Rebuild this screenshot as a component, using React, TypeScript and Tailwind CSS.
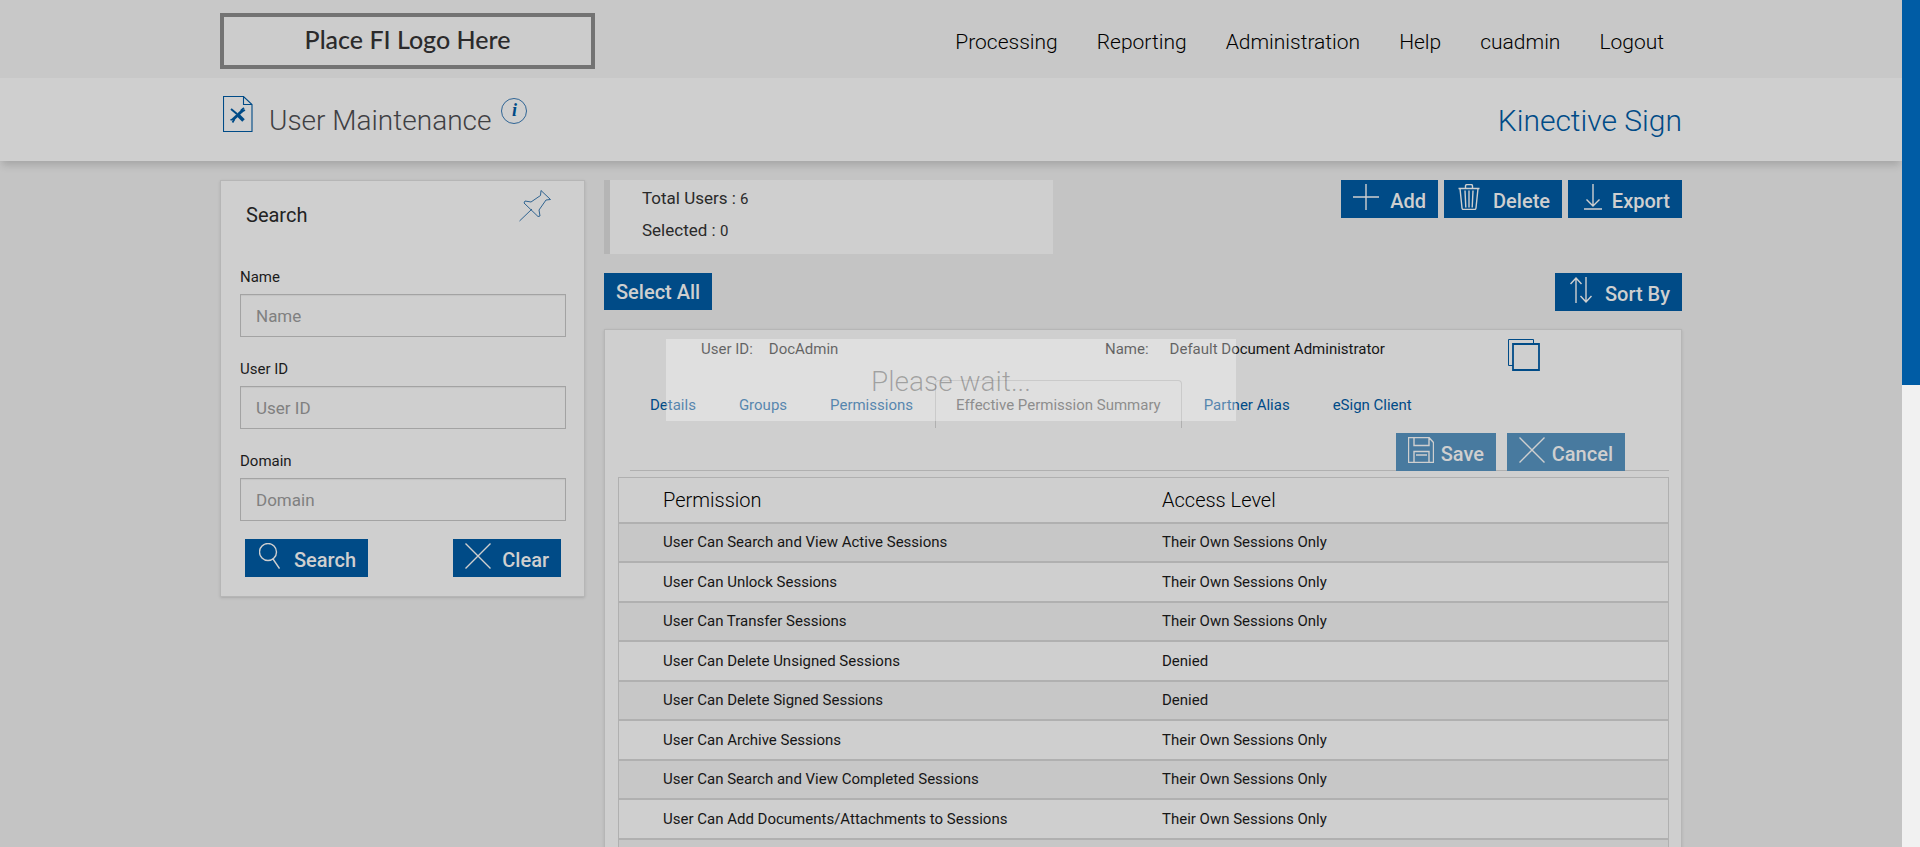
import type { ReactNode } from 'react';

type Permission = {
  name: string;
  access: string;
};

const navItems = ['Processing', 'Reporting', 'Administration', 'Help', 'cuadmin', 'Logout'];

const tabs = [
  'Details',
  'Groups',
  'Permissions',
  'Effective Permission Summary',
  'Partner Alias',
  'eSign Client',
];
const activeTab = 'Effective Permission Summary';

const permissions: Permission[] = [
  { name: 'User Can Search and View Active Sessions', access: 'Their Own Sessions Only' },
  { name: 'User Can Unlock Sessions', access: 'Their Own Sessions Only' },
  { name: 'User Can Transfer Sessions', access: 'Their Own Sessions Only' },
  { name: 'User Can Delete Unsigned Sessions', access: 'Denied' },
  { name: 'User Can Delete Signed Sessions', access: 'Denied' },
  { name: 'User Can Archive Sessions', access: 'Their Own Sessions Only' },
  { name: 'User Can Search and View Completed Sessions', access: 'Their Own Sessions Only' },
  { name: 'User Can Add Documents/Attachments to Sessions', access: 'Their Own Sessions Only' },
];

const iconPaths = {
  plus: 'M13 0v26M0 13h26',
  close: 'M0.500 0.500L25.500 25.500M25.500 0.500L0.500 25.500',
  search: 'M17.500 9a8.500 8.500 0 1 1-17 0a8.500 8.500 0 0 1 17 0zM14 16l6.500 9.500',
  trash:
    'M0.500 4.500h21M2 4.500l2 19.500q.2 1.500 1.500 1.500h11q1.300 0 1.500-1.500l2-19.500M7.500 4V2q0-1.500 1.500-1.500h4q1.500 0 1.500 1.500v2M7 6.500l.8 17M11 6.500v17M15 6.500l-.8 17',
  download: 'M9 0v21.500M2.500 15.500L9 22l6.500-6.500M0 25h18',
  sort: 'M6 26V1M0.500 7L6 1l5.500 6M16 0v25M10.500 19l5.500 6l5.500-6',
  save: 'M0.500 0.500h20.500l4.500 5v20h-25zM6 0.500v8h15v-8M6 25.500v-11h15v11M8 18h11',
};

function Icon({ name, width }: { name: keyof typeof iconPaths; width: number }) {
  return (
    <svg width={width} height={26} viewBox={`0 0 ${width} 26`} fill="none" stroke="currentColor" strokeWidth={1.4} aria-hidden="true">
      <path d={iconPaths[name]} />
    </svg>
  );
}

function ActionButton({
  children,
  icon,
  className = '',
}: {
  children: ReactNode;
  icon: ReactNode;
  className?: string;
}) {
  return (
    <button
      type="button"
      className={`flex h-[38px] items-start justify-between pt-1 pr-3 text-xl leading-[34px] font-medium text-[#cfcfcf] ${className}`}
    >
      {icon}
      {children}
    </button>
  );
}

function Field({ id, label }: { id: string; label: string }) {
  return (
    <div className="mb-[22px]">
      <label htmlFor={id} className="mb-[7px] block text-[15px] leading-5 text-[#1b1b1b]">
        {label}
      </label>
      <input
        id={id}
        type="text"
        placeholder={label}
        className="block h-[43px] w-full border border-[#a3a3a3] px-[15px] text-[17px] shadow-[inset_0_1px_1px_rgba(0,0,0,0.06)] placeholder:text-[#808080]"
      />
    </div>
  );
}

function Header() {
  return (
    <header>
      <div className="bg-[#c8c8c8]">
        <div className="mx-auto flex h-[78px] max-w-[1462px] items-center justify-between">
          <div className="mt-1 flex h-14 w-[375px] items-center justify-center border-4 border-[#737373] bg-[#cccccc] pb-0.5 font-['Lato'] text-[25px] font-medium text-[#2b2a2b]">
            Place FI Logo Here
          </div>
          <nav className="flex gap-[39px] pt-2 pr-[18px] text-[21px] font-light text-black">
            {navItems.map((item) => (
              <a key={item} href="#">
                {item}
              </a>
            ))}
          </nav>
        </div>
      </div>
      <div className="bg-[#cfcfcf] shadow-[0_6px_8px_-2px_rgba(0,0,0,0.16)]">
        <div className="mx-auto flex h-[83px] max-w-[1462px] items-center justify-between">
          <div className="flex items-center">
            <svg className="mb-3 ml-[3px]" width="30" height="36" viewBox="0 0 30 36" fill="none" stroke="#004b87" aria-hidden="true">
              <path d="M0.500 0.500h20l8.500 8v27h-28.500zM20.500 0.500v8h8.500" strokeWidth="1.100" />
              <path d="M10 23.500l9.500-9" strokeWidth="3" />
              <path d="M8 13l6 5" strokeWidth="2" />
              <path d="M15.500 19.500l5 5" strokeWidth="3.600" />
              <path d="M21 12l-2.500 2l.5 1.500l3-1.500M7.500 24l3-1l.5 1l-1.500 2.500" strokeWidth="1.800" />
            </svg>
            <h1 className="ml-4 pt-0.5 text-[28px] font-light text-[#3f4043]">User Maintenance</h1>
            <button
              type="button"
              aria-label="Page information"
              className="mb-[18px] ml-2.5 flex size-[26px] items-center justify-center rounded-full border border-[#2f6595] pb-px font-['Liberation_Serif'] text-lg font-bold text-[#004b87] italic"
            >
              i
            </button>
          </div>
          <div className="pt-0.5 text-[30px] font-light text-[#004b87]">Kinective Sign</div>
        </div>
      </div>
    </header>
  );
}

function SearchPanel() {
  return (
    <aside className="w-[365px] shrink-0 self-start border border-[#b6b6b6] bg-[#cfcfcf] pr-[18px] pb-[19px] pl-[19px] shadow-sm">
      <div className="flex h-[86px] items-start justify-between pt-[9px] pr-[15px] pl-1.5">
        <h2 className="pt-[11px] text-xl text-[#222]">Search</h2>
        <svg width="32" height="32" viewBox="0 0 32 32" fill="none" stroke="#2f6390" strokeWidth="1" aria-hidden="true">
          <path d="M22 0.500l9.500 9l-4.500.5l-7 10l1 6l-2 .5L5 13l1-2l6 1l9.500-6.500zM13 19L0.500 31" />
        </svg>
      </div>
      <form>
        <Field id="name" label="Name" />
        <Field id="user-id" label="User ID" />
        <Field id="domain" label="Domain" />
        <div className="-mt-1 flex justify-between px-[5px]">
          <ActionButton className="w-[123px] bg-[#004b87] pl-3.5" icon={<Icon name="search" width={21} />}>
            Search
          </ActionButton>
          <ActionButton className="w-[108px] bg-[#004b87] pl-3" icon={<Icon name="close" width={26} />}>
            Clear
          </ActionButton>
        </div>
      </form>
    </aside>
  );
}

function Toolbar() {
  return (
    <>
      <div className="flex items-start justify-between">
        <div className="h-[74px] w-[449px] border-l-6 border-[#b5b5b5] bg-[#cfcfcf] pt-[3px] pl-8 text-[17px] leading-[31px] text-[#2a2a2a]">
          <p>
            Total Users : <span className="text-[15px]">6</span>
          </p>
          <p>
            Selected : <span className="text-[15px]">0</span>
          </p>
        </div>
        <div className="flex gap-1.5">
          <ActionButton className="w-[97px] bg-[#004b87] pl-3" icon={<Icon name="plus" width={26} />}>
            Add
          </ActionButton>
          <ActionButton className="w-[118px] bg-[#004b87] pl-3.5" icon={<Icon name="trash" width={22} />}>
            Delete
          </ActionButton>
          <ActionButton className="w-[114px] bg-[#004b87] pl-4" icon={<Icon name="download" width={18} />}>
            Export
          </ActionButton>
        </div>
      </div>
      <div className="mt-[19px] mb-[18px] flex items-start justify-between">
        <button type="button" className="h-[37px] bg-[#004b87] px-3 text-xl font-medium text-[#cfcfcf]">
          Select All
        </button>
        <ActionButton className="w-[127px] bg-[#004b87] pl-[15px]" icon={<Icon name="sort" width={22} />}>
          Sort By
        </ActionButton>
      </div>
    </>
  );
}

function PermissionTable() {
  return (
    <table className="w-full table-fixed border-separate border-spacing-0 border-x border-[#b0b0b0] text-left text-[15px] text-[#161616]">
      <thead>
        <tr className="h-[46px] text-xl text-black">
          <th className="w-[543px] border-y border-[#b0b0b0] pl-11 font-light">Permission</th>
          <th className="border-y border-[#b0b0b0] font-light">Access Level</th>
        </tr>
      </thead>
      <tbody>
        {permissions.map((permission) => (
          <tr key={permission.name} className="odd:h-[39px] odd:bg-[#c7c7c7] even:h-10">
            <td className="border-y border-[#b0b0b0] pl-11">{permission.name}</td>
            <td className="border-y border-[#b0b0b0]">{permission.access}</td>
          </tr>
        ))}
        <tr className="h-10 bg-[#c7c7c7]">
          <td className="border-y border-[#b0b0b0]" />
          <td className="border-y border-[#b0b0b0]" />
        </tr>
      </tbody>
    </table>
  );
}

function UserCard() {
  return (
    <section className="border border-[#b6b6b6] bg-[#cfcfcf] pr-3 pl-[13px] shadow-sm">
      <div className="flex h-[50px] items-start pt-[9px] pl-[83px] text-[15px] leading-5 text-[#161616]">
        <div className="flex w-[404px] gap-4">
          <span>User ID:</span>
          <span>DocAdmin</span>
        </div>
        <div className="flex w-[403px] gap-[21px]">
          <span>Name:</span>
          <span>Default Document Administrator</span>
        </div>
        <button type="button" aria-label="Copy user" className="text-[#004b87]">
          <svg width="32" height="32" viewBox="0 0 32 32" fill="none" stroke="currentColor" aria-hidden="true">
            <path d="M5 26.500h-4.500v-26h25v4" strokeWidth="1" />
            <path d="M5 5h26v26h-26z" strokeWidth="1.800" />
          </svg>
        </button>
      </div>
      <div className="flex gap-px pl-[11px]">
        {tabs.map((tab) => (
          <button
            key={tab}
            type="button"
            className={`h-12 rounded-t border border-b-0 px-5 pt-0.5 text-[15px] ${
              tab === activeTab ? 'border-[#b0b0b0] text-[#555]' : 'border-transparent text-[#004b87]'
            }`}
          >
            {tab}
          </button>
        ))}
      </div>
      <div className="mb-1.5 ml-3 flex justify-end gap-[11px] border-b border-[#b0b0b0] pt-[5px] pr-11">
        <ActionButton className="-mb-px w-[100px] bg-[#487a9f] pl-3" icon={<Icon name="save" width={26} />}>
          Save
        </ActionButton>
        <ActionButton className="-mb-px w-[118px] bg-[#487a9f] pl-3" icon={<Icon name="close" width={26} />}>
          Cancel
        </ActionButton>
      </div>
      <PermissionTable />
    </section>
  );
}

export default function App() {
  return (
    <div className="relative flex h-screen overflow-hidden bg-[#c4c4c4] font-['Roboto',sans-serif]">
      <div className="min-w-0 flex-1">
        <Header />
        <main className="mx-auto mt-[19px] flex max-w-[1462px] gap-[19px]">
          <SearchPanel />
          <div className="min-w-0 flex-1">
            <Toolbar />
            <UserCard />
          </div>
        </main>
      </div>
      <div className="w-[18px] shrink-0 bg-[#f1f1f1]">
        <div className="h-[385px] bg-[#005ca5]" />
      </div>

      {/* loading message */}
      <div className="pointer-events-none absolute inset-x-0 top-[339px] flex justify-center pr-[18px]">
        <div
          role="status"
          className="flex h-[82px] w-[570px] items-center justify-center bg-white/33 pt-1 text-[28px] font-light text-black/28"
        >
          Please wait...
        </div>
      </div>
    </div>
  );
}
